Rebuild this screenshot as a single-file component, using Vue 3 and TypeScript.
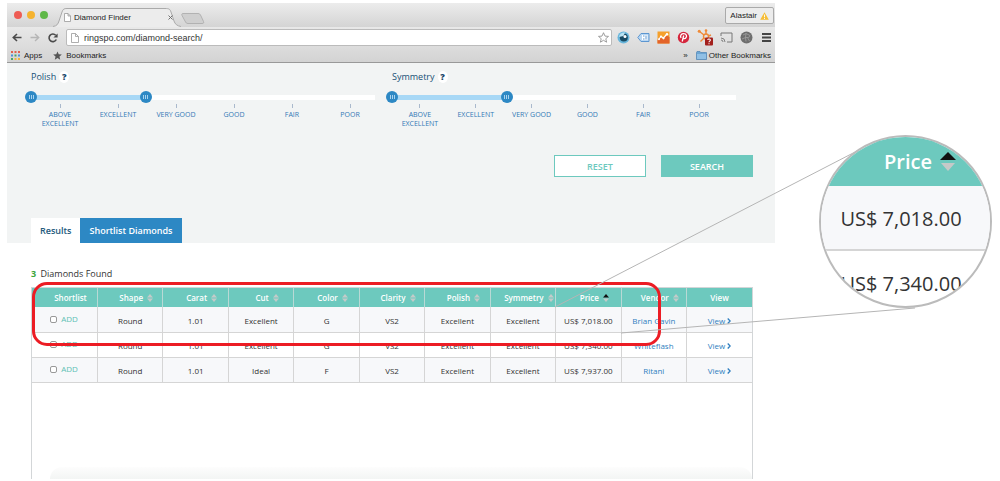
<script setup lang="ts">
import { ref } from 'vue'

interface Column {
  label: string
  sort: 'none' | 'both' | 'asc'
}

interface Diamond {
  id: number
  shape: string
  carat: string
  cut: string
  color: string
  clarity: string
  polish: string
  symmetry: string
  price: string
  vendor: string
}

interface Filter {
  key: string
  title: string
  from: number
  to: number
}

const grades: string[] = ['ABOVE EXCELLENT', 'EXCELLENT', 'VERY GOOD', 'GOOD', 'FAIR', 'POOR']

const filters = ref<Filter[]>([
  { key: 'polish', title: 'Polish', from: 0, to: 2 },
  { key: 'symmetry', title: 'Symmetry', from: 0, to: 2 },
])

const columns: Column[] = [
  { label: 'Shortlist', sort: 'none' },
  { label: 'Shape', sort: 'both' },
  { label: 'Carat', sort: 'both' },
  { label: 'Cut', sort: 'both' },
  { label: 'Color', sort: 'both' },
  { label: 'Clarity', sort: 'both' },
  { label: 'Polish', sort: 'both' },
  { label: 'Symmetry', sort: 'both' },
  { label: 'Price', sort: 'asc' },
  { label: 'Vendor', sort: 'both' },
  { label: 'View', sort: 'none' },
]

const diamonds: Diamond[] = [
  { id: 1, shape: 'Round', carat: '1.01', cut: 'Excellent', color: 'G', clarity: 'VS2', polish: 'Excellent', symmetry: 'Excellent', price: 'US$ 7,018.00', vendor: 'Brian Gavin' },
  { id: 2, shape: 'Round', carat: '1.01', cut: 'Excellent', color: 'G', clarity: 'VS2', polish: 'Excellent', symmetry: 'Excellent', price: 'US$ 7,340.00', vendor: 'Whiteflash' },
  { id: 3, shape: 'Round', carat: '1.01', cut: 'Ideal', color: 'F', clarity: 'VS2', polish: 'Excellent', symmetry: 'Excellent', price: 'US$ 7,937.00', vendor: 'Ritani' },
]

const shortlist = ref<number[]>([])
const address = ref('ringspo.com/diamond-search/')
</script>

<template>
  <div class="stage">
    <div class="browser">
      <header class="chrome">
        <div class="tab-strip">
          <div class="lights">
            <i class="light red"></i><i class="light amber"></i><i class="light green"></i>
          </div>
          <div class="tab">
            <svg class="tab-shape" viewBox="0 0 128 19" preserveAspectRatio="none" aria-hidden="true">
              <path d="M0 18.5C4 18 5 16 6 13L9 4C10 1 11 .5 14 .5H112C116 .5 117 1 118 4L121 13C122 16 124 18 128 18.5V19H0Z" fill="#ececec" />
              <path d="M0 18.5C4 18 5 16 6 13L9 4C10 1 11 .5 14 .5H112C116 .5 117 1 118 4L121 13C122 16 124 18 128 18.5" fill="none" stroke="#aaa" />
            </svg>
            <div class="tab-label">
              <svg width="7" height="9" viewBox="0 0 7 9" aria-hidden="true"><path d="M.5.5H4L6.500 3V8.500H.5ZM4 .5V3H6.500" fill="#fff" stroke="#999" stroke-width=".8" /></svg>
              <span>Diamond Finder</span>
              <button class="bare close" aria-label="Close tab">
                <svg width="5" height="5" viewBox="0 0 5 5"><path d="M.5.5L4.500 4.500M4.500.5L.5 4.500" stroke="#666" stroke-width=".9" /></svg>
              </button>
            </div>
          </div>
          <button class="bare new-tab" aria-label="New tab">
            <svg width="24" height="11" viewBox="0 0 24 11"><path d="M2 .5H17C18.500.5 19 1 20 3L22.500 8.500C23 10 22.500 10.500 21 10.500H7C5.500 10.500 5 10 4 8L1 2.500C.5 1 1 .5 2 .5Z" fill="#cfcfcf" stroke="#a8a8a8" stroke-width=".8" /></svg>
          </button>
          <button class="profile">
            Alastair
            <svg width="9" height="8" viewBox="0 0 9 8" aria-hidden="true"><path d="M4.500.2L8.800 7.800H.2Z" fill="#f6bd33" /><path d="M4.500 2.500V5.300M4.500 6V7" stroke="#fff" stroke-width=".9" /></svg>
          </button>
        </div>

        <div class="toolbar">
          <button class="bare" aria-label="Back">
            <svg width="10" height="9" viewBox="0 0 10 9"><path d="M9.500 4.500H1.500M5 1L1.300 4.500L5 8" fill="none" stroke="#4a4a4a" stroke-width="1.600" /></svg>
          </button>
          <button class="bare" aria-label="Forward">
            <svg width="10" height="9" viewBox="0 0 10 9"><path d="M.5 4.500H8.500M5 1L8.700 4.500L5 8" fill="none" stroke="#b5b5b5" stroke-width="1.400" /></svg>
          </button>
          <button class="bare" aria-label="Reload">
            <svg width="10" height="10" viewBox="0 0 10 10"><path d="M8.300 6.500A3.800 3.800 0 1 1 7.700 2.300" fill="none" stroke="#4a4a4a" stroke-width="1.600" /><path d="M9.600.4V4.600H5.400Z" fill="#4a4a4a" /></svg>
          </button>
          <div class="omnibox">
            <svg width="8" height="10" viewBox="0 0 8 10" aria-hidden="true"><path d="M.5.5H4.500L7.500 3.500V9.500H.5ZM4.500.5V3.500H7.500" fill="#fff" stroke="#999" stroke-width=".8" /></svg>
            <input v-model="address" type="text" aria-label="Address" />
            <svg width="11" height="11" viewBox="0 0 11 11" aria-hidden="true"><path d="M5.500.7L7 4.100L10.500 4.400L7.800 6.700L8.600 10.200L5.500 8.300L2.400 10.200L3.200 6.700L.5 4.400L4 4.100Z" fill="#fff" stroke="#888" stroke-width=".8" /></svg>
          </div>
          <div class="extensions">
            <svg viewBox="0 0 13 13"><circle cx="6.500" cy="6.500" r="6" fill="#68b6dc" /><circle cx="6.800" cy="6.500" r="4" fill="#184a62" /><path d="M2 6A5 5 0 0 1 8 1.500L6.500 5Z" fill="#b9e2f2" /><circle cx="8" cy="5.500" r="1.500" fill="#fff" /></svg>
            <svg viewBox="0 0 13 13"><path d="M4 2.500H12V10.500H4L.8 6.500Z" fill="#b9d7f3" stroke="#5c96d0" /><path d="M5 4H10.500V9H5Z" fill="#fff" /><path d="M6 5H7.500M6 8H7.500M9 4.500V8.500" stroke="#5c96d0" /></svg>
            <svg viewBox="0 0 13 13"><path d="M.5.5H12.500V12.500H.5Z" fill="#f5a02c" /><path d="M.5 12.500V9L3 6L5.500 8L9 4L12.500 6V12.500Z" fill="#e3642a" /><path d="M2 8L4 5.500L6.500 7L10 3" fill="none" stroke="#fff" stroke-width="1.200" /><g fill="#fff"><circle cx="4" cy="5.500" r="1.100" /><circle cx="6.500" cy="7.300" r="1.100" /><circle cx="10" cy="3.300" r="1.200" /><circle cx="2" cy="8.300" r="1" /></g></svg>
            <svg viewBox="0 0 13 13"><circle cx="6.500" cy="6.500" r="5.700" fill="#d5263d" /><path d="M4 7C2.700 4.500 4.500 2.700 6.700 2.700C9.700 2.700 10 5.200 9 6.700C8.200 8 6.500 7.700 6.200 6.900M6.700 4.500L5.200 10.500" fill="none" stroke="#fff" stroke-width="1.300" /></svg>
            <svg viewBox="0 0 16 17"><g stroke="#ef8a37" fill="none" stroke-width="1.400"><circle cx="9" cy="7.500" r="2.500" /><path d="M7 6L2.500 2.500M9 5V1.500M7 9L3.500 12.500M11.500 7L14 6" /></g><circle cx="2.200" cy="2.200" r="1.500" fill="#ef8a37" /><circle cx="9" cy="1.500" r="1.300" fill="#ef8a37" /><rect x="8" y="8.500" width="8" height="8" rx="1" fill="#a3201d" /><path d="M10.700 11C11 9.500 13.500 9.800 13.300 11.300C13.200 12.200 12 12.200 12 13.200M12 14.200V15.300" fill="none" stroke="#fff" stroke-width="1.100" /></svg>
            <svg viewBox="0 0 13 13"><path d="M1 5V2H12V11H7" fill="none" stroke="#777" /><path d="M1 7A4 4 0 0 1 5 11M1 9A2 2 0 0 1 3 11" fill="none" stroke="#777" stroke-width=".9" /></svg>
            <svg viewBox="0 0 13 13"><circle cx="6.500" cy="6.500" r="6" fill="#6e6e6e" /><path d="M3 4L6 2.500L10 4.500L8 7.500L9.500 10M2 8L5.500 6.500L6 10.500M6 2.500L5.500 6.500H8" fill="none" stroke="#a2a2a2" stroke-width=".8" /></svg>
            <svg viewBox="0 0 13 13"><path d="M2 3H11M2 6.500H11M2 10H11" stroke="#444" stroke-width="2" /></svg>
          </div>
        </div>

        <nav class="bookmarks">
          <a href="#apps">
            <svg width="9" height="9" viewBox="0 0 9 9" aria-hidden="true">
              <path d="M0 0H2V2H0ZM3.500 0H5.500V2H3.500ZM7 0H9V2H7Z" fill="#e2604e" />
              <path d="M0 3.500H2V5.500H0ZM7 3.500H9V5.500H7Z" fill="#4e8fdc" /><path d="M3.500 3.500H5.500V5.500H3.500Z" fill="#4aa565" />
              <path d="M0 7H2V9H0Z" fill="#4aa565" /><path d="M3.500 7H5.500V9H3.500ZM7 7H9V9H7Z" fill="#eeb640" />
            </svg>
            Apps
          </a>
          <a href="#bookmarks">
            <svg width="9" height="9" viewBox="0 0 11 11" aria-hidden="true"><path d="M5.500.5L7 4.100L10.800 4.400L7.900 6.800L8.800 10.600L5.500 8.500L2.200 10.600L3.100 6.800L.2 4.400L4 4.100Z" fill="#555" /></svg>
            Bookmarks
          </a>
          <span class="more">»</span>
          <a href="#other" class="other">
            <svg width="11" height="9" viewBox="0 0 11 9" aria-hidden="true"><path d="M.5 1.500L1 .5H4L4.800 1.500H10.500V8.500H.5Z" fill="#6ba5d3" stroke="#4c83b3" stroke-width=".7" /><path d="M1 3H10V8H1Z" fill="#91c0e5" /></svg>
            Other Bookmarks
          </a>
        </nav>
      </header>

      <main>
        <section class="search">
          <div class="filters">
            <div v-for="filter in filters" :key="filter.key" :class="['filter', filter.key]">
              <h2>{{ filter.title }} <span class="help">?</span></h2>
              <div class="slider">
                <div class="rail">
                  <div class="range" :style="{ marginLeft: (filter.from / 6) * 100 + '%', width: ((filter.to - filter.from) / 6) * 100 + '%' }"></div>
                </div>
                <input v-model.number="filter.from" type="range" min="0" max="6" :aria-label="filter.title + ' from'" />
                <input v-model.number="filter.to" type="range" min="0" max="6" :aria-label="filter.title + ' to'" />
              </div>
              <ul class="grades">
                <li v-for="grade in grades" :key="grade">{{ grade }}</li>
              </ul>
            </div>
          </div>
          <div class="actions">
            <button class="action reset">RESET</button>
            <button class="action submit">SEARCH</button>
          </div>
          <div class="tabs" role="tablist">
            <button role="tab" aria-selected="true" class="current">Results</button>
            <button role="tab" aria-selected="false">Shortlist Diamonds</button>
          </div>
        </section>

        <section class="results">
          <p class="count"><b>3</b> Diamonds Found</p>
          <div class="table-frame">
            <table>
              <thead>
                <tr>
                  <th v-for="(column, i) in columns" :key="column.label" :class="{ last: i === columns.length - 1 }">
                    {{ column.label }}<svg v-if="column.sort !== 'none'" class="sort" viewBox="0 0 6 8" aria-hidden="true">
                      <path d="M3 0L6 3.500H0Z" :fill="column.sort === 'asc' ? '#111' : '#c3cbc9'" />
                      <path d="M0 4.500H6L3 8Z" fill="#c3cbc9" />
                    </svg>
                  </th>
                </tr>
              </thead>
              <tbody>
                <tr v-for="d in diamonds" :key="d.id">
                  <td class="pick">
                    <label class="add"><input v-model="shortlist" type="checkbox" :value="d.id" /><span>ADD</span></label>
                  </td>
                  <td>{{ d.shape }}</td>
                  <td>{{ d.carat }}</td>
                  <td>{{ d.cut }}</td>
                  <td>{{ d.color }}</td>
                  <td>{{ d.clarity }}</td>
                  <td>{{ d.polish }}</td>
                  <td>{{ d.symmetry }}</td>
                  <td>{{ d.price }}</td>
                  <td><a href="#vendor">{{ d.vendor }}</a></td>
                  <td>
                    <a href="#view">View <svg width="4" height="6" viewBox="0 0 4 6" aria-hidden="true"><path d="M.7.5L3.200 3L.7 5.500" fill="none" stroke="#2f7fc0" stroke-width="1.300" /></svg></a>
                  </td>
                </tr>
              </tbody>
            </table>
            <div class="fade"></div>
            <div class="highlight"></div>
          </div>
        </section>
      </main>

      <svg class="leaders" width="360" height="172" viewBox="0 0 360 172" aria-hidden="true">
        <path d="M0 171L302 15" fill="none" stroke="#b5b5b5" />
      </svg>
      <svg class="leaders lower" width="294" height="28" viewBox="0 0 294 28" aria-hidden="true">
        <path d="M0 26L294 1" fill="none" stroke="#b5b5b5" />
      </svg>

      <div class="lens">
        <div class="lens-head">
          Price
          <svg width="16" height="19" viewBox="0 0 16 19" aria-hidden="true"><path d="M8 0L16 8H0Z" fill="#111" /><path d="M1 11H15L8 19Z" fill="#c6c9c8" /></svg>
        </div>
        <div class="lens-row tinted">US$ 7,018.00</div>
        <div class="lens-row">US$ 7,340.00</div>
      </div>
    </div>
  </div>
</template>

<style>
body {
  background: #fff;
}
</style>

<style scoped>
* {
  box-sizing: border-box;
}
.stage {
  padding: 3px 225px 0 7px;
  font-family: "Open Sans", "Noto Sans", sans-serif;
  color: #333;
}
.browser {
  position: relative;
}
.bare {
  display: flex;
  border: 0;
  padding: 0;
  background: none;
}
.chrome {
  font-family: "Liberation Sans", Arial, sans-serif;
  font-size: 8px;
  color: #222;
  border-bottom: 1px solid #999;
  background: linear-gradient(#ececec, #d4d4d4 24px, #e8e8e8 24px, #d3d3d3);
}
.tab-strip {
  display: flex;
  align-items: flex-end;
  height: 24px;
  padding-right: 1px;
}
.lights {
  display: flex;
  gap: 5px;
  padding-left: 7px;
  width: 46px;
  align-self: center;
}
.light {
  width: 8px;
  height: 8px;
  border-radius: 50%;
}
.red { background: #ee5c54; }
.amber { background: #f5b32f; }
.green { background: #5fb848; }
.tab {
  display: grid;
  width: 128px;
  height: 19px;
}
.tab-shape,
.tab-label {
  grid-area: 1 / 1;
}
.tab-shape {
  width: 100%;
  height: 100%;
}
.tab-label {
  display: flex;
  align-items: center;
  gap: 3px;
  padding: 0 8px 0 11px;
}
.close {
  margin-left: auto;
}
.new-tab {
  margin-bottom: 3px;
}
.profile {
  display: flex;
  align-items: center;
  gap: 3px;
  height: 17px;
  margin: 0 0 3px auto;
  padding: 0 4px;
  border: 1px solid #aaa;
  border-radius: 2px;
  background: #ececec;
  font: inherit;
  color: inherit;
}
.toolbar {
  display: flex;
  align-items: center;
  gap: 8px;
  height: 21px;
  padding: 0 2px 0 5px;
}
.omnibox {
  display: flex;
  flex: 1;
  align-items: center;
  gap: 5px;
  height: 17px;
  padding: 0 2px 0 4px;
  border: 1px solid #bbb;
  border-radius: 2px;
  background: #fff;
}
.omnibox input {
  flex: 1;
  min-width: 0;
  padding: 0;
  border: 0;
  background: none;
  font: 9px "Liberation Sans", Arial, sans-serif;
  color: #333;
}
.extensions {
  display: flex;
  align-items: center;
  gap: 7px;
  margin-left: -3px;
}
.extensions svg {
  width: 13px;
  height: 13px;
}
.extensions svg:nth-child(5) {
  width: 16px;
  height: 17px;
}
.bookmarks {
  display: flex;
  align-items: center;
  gap: 11px;
  height: 14px;
  padding: 0 4px;
}
.bookmarks a {
  display: flex;
  align-items: center;
  gap: 4px;
  color: inherit;
  text-decoration: none;
}
.bookmarks .other {
  gap: 2px;
}
.more {
  margin: 0 -3px 0 auto;
}
.search {
  background: #f2f4f4;
  padding: 8px 22px 0 24px;
}
.filters {
  display: grid;
  grid-template-columns: 1fr 1fr;
}
.filter {
  padding-right: 17px;
}
h2 {
  display: flex;
  gap: 3px;
  margin: 0;
  font-size: 9px;
  font-weight: 500;
  line-height: 12px;
  color: #174f75;
}
.help {
  width: 10px;
  border-radius: 50%;
  background: #fff;
  text-align: center;
  font-weight: 800;
  color: #174769;
}
.slider {
  display: grid;
  align-items: center;
  height: 12px;
  margin: 8px 0 1px;
}
.slider > * {
  grid-area: 1 / 1;
}
.rail {
  height: 5px;
  background: #fff;
}
.range {
  height: 5px;
  background: #a8d8f6;
}
.slider input {
  height: 12px;
  margin: 0 -6px;
  appearance: none;
  background: none;
  pointer-events: none;
}
.slider input::-webkit-slider-thumb {
  appearance: none;
  width: 12px;
  height: 12px;
  border: 0;
  border-radius: 50%;
  background:
    linear-gradient(90deg, #a9d2ee 1px, transparent 1px 2px, #a9d2ee 2px 3px, transparent 3px 4px, #a9d2ee 4px) center / 5px 4px no-repeat,
    #2d88c4;
  pointer-events: auto;
}
.grades {
  display: grid;
  grid-template-columns: repeat(6, 1fr);
  margin: 0 -4px 0 0;
  padding: 0;
  list-style: none;
  font-size: 7px;
  line-height: 9px;
  text-align: center;
  color: #3378b4;
}
.symmetry .grades {
  margin-right: 9px;
}
.grades li::before {
  content: "";
  display: block;
  width: 1px;
  height: 4px;
  margin: 0 auto 2px;
  background: #aab9cc;
}
.actions {
  display: flex;
  justify-content: flex-end;
  gap: 15px;
  margin-top: 27px;
}
.action {
  width: 92px;
  height: 22px;
  padding: 0;
  border: 1px solid #6dc9be;
  font: 600 9px "Open Sans", "Noto Sans", sans-serif;
}
.reset {
  background: #fff;
  color: #6dc9be;
}
.submit {
  background: #6dc9be;
  color: #fff;
}
.tabs {
  display: flex;
  margin-top: 41px;
}
.tabs button {
  height: 25px;
  padding: 0 9px;
  border: 0;
  background: #2d88c4;
  font: 600 9px "Open Sans", "Noto Sans", sans-serif;
  color: #fff;
}
.tabs .current {
  background: #fff;
  color: #23597c;
}
.results {
  padding: 24px 22px 0 24px;
}
.count {
  margin: 0 0 6px;
  font-size: 9px;
  line-height: 14px;
}
.count b {
  margin-right: 2px;
  color: #3ca53c;
}
.table-frame {
  position: relative;
  display: flex;
  flex-direction: column;
  min-height: 192px;
  border: 1px solid #d3d6d8;
  border-bottom: 0;
}
table {
  width: 100%;
  table-layout: fixed;
  border-collapse: collapse;
  font-size: 8px;
  line-height: 10px;
  text-align: center;
}
th {
  height: 19px;
  padding: 0 0 0 12px;
  background: #6dc9be;
  border-right: 1px solid #b9d9d5;
  font-size: 8px;
  font-weight: 600;
  white-space: nowrap;
  color: #fff;
}
th.last {
  padding-left: 0;
}
td {
  height: 25px;
  padding: 3px 0 0;
  border-right: 1px solid #d5d5d5;
  border-bottom: 1px solid #d5d5d5;
  white-space: nowrap;
}
.pick {
  padding-top: 0;
}
th:last-child,
td:last-child {
  border-right: 0;
}
tbody tr:nth-child(odd) {
  background: #f7f8fa;
}
td a {
  color: #2f7fc0;
  text-decoration: none;
}
.sort {
  width: 6px;
  height: 8px;
  margin-left: 4px;
  vertical-align: middle;
}
.add {
  display: inline-flex;
  align-items: center;
  gap: 4px;
  padding-right: 1px;
  font-weight: 500;
  color: #5cc0b4;
}
.add input {
  width: 7px;
  height: 7px;
  margin: 0;
  appearance: none;
  border: 1px solid #999;
  border-radius: 2px;
  background: #fff;
}
.add input:checked {
  background: #6dc9be;
}
.fade {
  height: 12px;
  margin: auto 0 0 18px;
  border-top-left-radius: 12px;
  border-top-right-radius: 12px;
  background: linear-gradient(#fdfdfd, #f3f5f4);
}
/* Callout drawn over the page */
.highlight {
  position: absolute;
  top: -6px;
  left: 0;
  right: 91px;
  height: 64px;
  border: 3px solid #ec1c24;
  border-radius: 15px;
  pointer-events: none;
}
.leaders {
  position: absolute;
  top: 133px;
  right: -140px;
  pointer-events: none;
}
.leaders.lower {
  top: 304px;
}
.lens {
  position: absolute;
  top: 132px;
  left: calc(100% + 44px);
  width: 173px;
  height: 173px;
  overflow: hidden;
  border: 2px solid #bbb;
  border-radius: 50%;
  background: #fff;
  font-size: 20px;
  text-align: center;
}
.lens-head {
  display: flex;
  align-items: center;
  justify-content: center;
  gap: 8px;
  height: 49px;
  padding-left: 29px;
  background: #6dc9be;
  font-weight: 600;
  color: #fff;
}
.lens-row {
  height: 65px;
  padding-right: 9px;
  line-height: 65px;
}
.tinted {
  border-bottom: 2px solid #d5d5d5;
  background: #f7f8fa;
}
</style>
